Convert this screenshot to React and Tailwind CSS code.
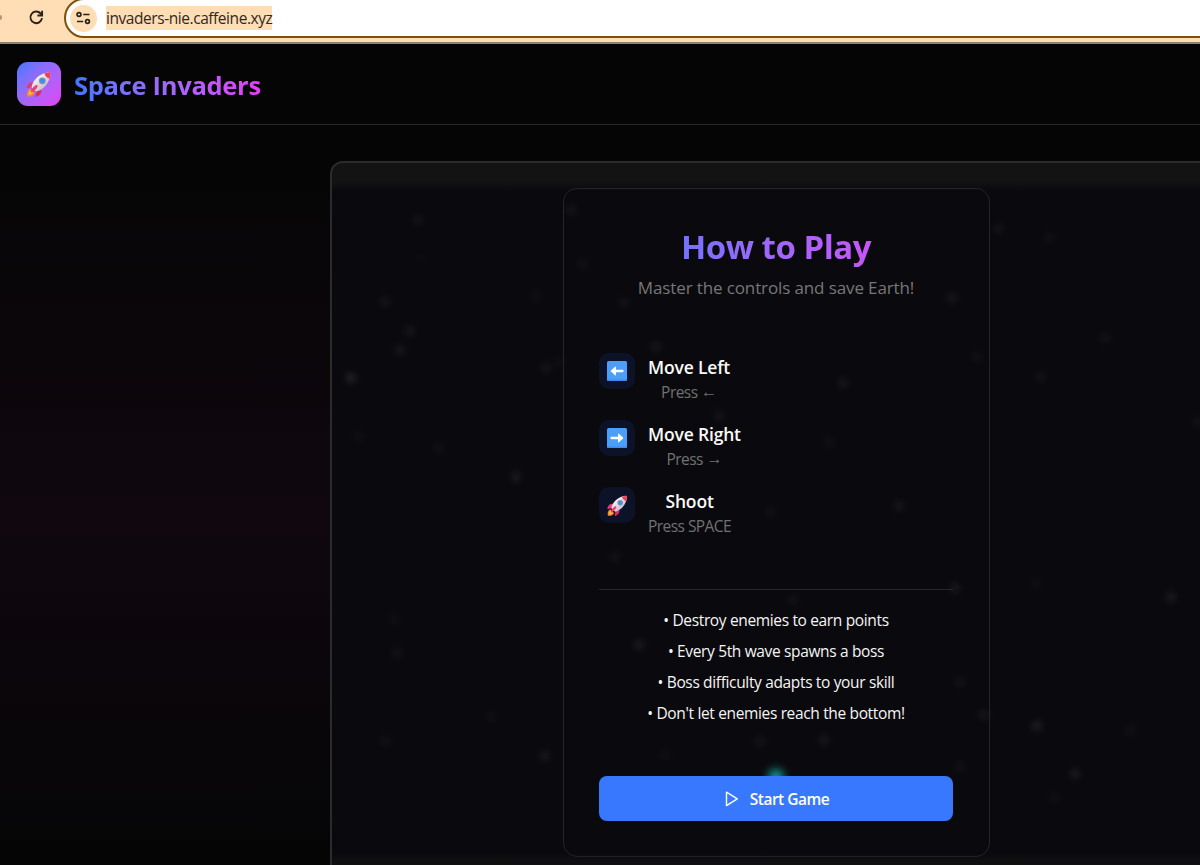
import { useId } from "react";

const controls = [
  { icon: "left", label: "Move Left", keyName: "←" },
  { icon: "right", label: "Move Right", keyName: "→" },
  { icon: "rocket", label: "Shoot", keyName: "SPACE" },
];

const tips = [
  "Destroy enemies to earn points",
  "Every 5th wave spawns a boss",
  "Boss difficulty adapts to your skill",
  "Don't let enemies reach the bottom!",
];

// x, y inside the play field, and brightness
const stars = [
  [85, 56, 0.05], [89, 94, 0.02], [52, 138, 0.06], [77, 167, 0.07], [67, 186, 0.08],
  [18, 214, 0.13], [26, 273, 0.03], [106, 284, 0.04], [183, 313, 0.09], [213, 204, 0.06],
  [226, 198, 0.03], [203, 132, 0.03], [238, 46, 0.06], [250, 100, 0.04], [291, 139, 0.05],
  [323, 183, 0.07], [386, 252, 0.06], [510, 219, 0.07], [619, 134, 0.07], [644, 193, 0.04],
  [666, 65, 0.05], [716, 74, 0.04], [772, 174, 0.05], [708, 213, 0.05], [865, 258, 0.05],
  [566, 342, 0.07], [496, 278, 0.04], [438, 348, 0.04], [282, 393, 0.05], [622, 424, 0.08],
  [703, 420, 0.03], [838, 433, 0.09], [460, 436, 0.05], [306, 481, 0.09], [64, 489, 0.05],
  [61, 455, 0.03], [627, 518, 0.05], [651, 551, 0.07], [704, 562, 0.11], [798, 566, 0.04],
  [742, 610, 0.09], [722, 634, 0.03], [491, 576, 0.08], [427, 578, 0.06], [212, 592, 0.08],
  [158, 553, 0.03], [52, 577, 0.04], [332, 591, 0.03], [627, 603, 0.04],
];

function Rocket({ size }) {
  const id = useId();
  return (
    <svg width={size} height={size} viewBox="0 0 28 28" fill="none">
      <defs>
        <linearGradient id={id} x1="9" y1="7" x2="19" y2="18" gradientUnits="userSpaceOnUse">
          <stop stopColor="#fffafa" />
          <stop offset="1" stopColor="#c9bfcc" />
        </linearGradient>
      </defs>
      <path d="M5 18.5C1.8 20.5 1.7 24 2.4 26.5c3 .2 6-.3 7.4-3.5z" fill="#f98234" />
      <path d="M5.5 20c-1.8 1.3-2.2 2.8-2.1 5.2 2-.1 3.6-.7 4.6-2.4z" fill="#ffb63d" />
      <path d="M9.2 12.2C5 11.2 2.8 13.6 1.6 17.4c-.2.7.4 1 1 .8l5.4-1.4z" fill="#e63b72" />
      <path d="M16 19c1.2 3.8-.8 6.5-4.7 7.7-.7.2-1-.4-.8-1l1.3-5.5z" fill="#d52e62" />
      <path d="M6.5 17.2C8 9.500 14.5 3.5 23.8 2.2c.9-.1 1.9.8 1.8 1.8C24.5 13 18.5 20 11 21.500z" fill={`url(#${id})`} />
      <path d="M19.4 3.4c1.5-.6 3-.9 4.8-1.1.9 0 1.5.7 1.4 1.6-.2 1.7-.6 3.3-1.1 4.8-2.5-.7-4.5-2.7-5.1-5.3z" fill="#ef3f5b" />
      <circle cx="17.3" cy="10.8" r="3.4" fill="#7d91b8" />
      <circle cx="17.3" cy="10.8" r="2.3" fill="#3f8fe8" />
      <path d="M10.6 15.3c1-.9 2.3-.1 2 .9-.9 2.6-3.1 4.9-5.5 6.1-.8.3-1.5-.4-1.2-1.2.9-2.3 2.5-4.3 4.7-5.8z" fill="#ec4079" />
    </svg>
  );
}

function ArrowTile({ right }) {
  return (
    <svg width="20" height="20" viewBox="0 0 20 20" fill="none" className={right ? "-scale-x-100" : ""}>
      <rect width="20" height="20" rx="1.5" fill="#4b9ff8" />
      <path d="M0 18.5h20v.1a1.4 1.4 0 0 1-1.4 1.4H1.4A1.4 1.4 0 0 1 0 18.6z" fill="#4389ec" />
      <path d="M15.5 10H7" stroke="#fff" strokeWidth="2.3" strokeLinecap="round" />
      <path d="M4 9.5 8 5.800c.5-.4 1-.1 1 .5v7.400c0 .6-.5.9-1 .5L4 10.500c-.3-.3-.3-.7 0-1z" fill="#fff" />
    </svg>
  );
}

function BrowserBar() {
  return (
    <div className="flex h-11 shrink-0 items-start border-b-2 border-[#8f8172] bg-[#ffddb5]">
      <div className="mt-[15px] h-[5px] w-0.5 rounded-r bg-[#b6977a]" />
      <svg className="mt-[9px] ml-[26px] shrink-0" width="17" height="17" viewBox="0 0 17 17" fill="none" stroke="#2c2118" strokeWidth="1.9">
        <path d="M14 9.200A5.800 5.800 0 1 1 12.600 4.500L14 6" />
        <path d="M14.100 1.800v4.700H9.400" />
      </svg>
      <div className="-mt-0.5 -mr-10 ml-[19px] flex h-10 flex-1 items-center rounded-full border-2 border-[#7c5105] bg-white pl-1">
        <div className="flex size-[27px] items-center justify-center rounded-full bg-[#ffddb5]">
          <svg width="15" height="14" viewBox="0 0 15 14" fill="none" stroke="#2c2118" strokeWidth="1.7">
            <circle cx="3" cy="3.5" r="1.9" />
            <path d="M7.200 3.500h6.300M1 10.500h6.200" />
            <circle cx="11.5" cy="10.5" r="1.9" />
          </svg>
        </div>
        <span className="ml-[9px] h-6 bg-[#ffddb5] text-[15.5px] leading-6 tracking-[-0.44px] whitespace-nowrap text-[#33281f]">
          invaders-nie.caffeine.xyz
        </span>
      </div>
    </div>
  );
}

function Header() {
  return (
    <header className="flex h-[81px] shrink-0 items-center border-b border-[#292929] bg-[#050505] pl-[17px]">
      <div className="flex size-11 items-center justify-center rounded-[11px] bg-linear-to-br from-[#3b78ff] to-[#e43df5]">
        <Rocket size={28} />
      </div>
      <h1 className="mt-0.5 ml-[13px] bg-linear-to-r from-[#3b78ff] to-[#e43df5] bg-clip-text text-[25.5px] leading-9 font-bold tracking-[-0.3px] whitespace-nowrap text-transparent">
        Space Invaders
      </h1>
    </header>
  );
}

function Control({ icon, label, keyName }) {
  return (
    <li className="flex h-[46px] items-start">
      <div className="flex size-9 items-center justify-center rounded-[10px] bg-[#0c1228]">
        {icon === "rocket" ? <Rocket size={23} /> : <ArrowTile right={icon === "right"} />}
      </div>
      <div className="ml-[13px] pt-px text-center whitespace-nowrap">
        <p className="text-[17.5px] leading-[27px] font-semibold tracking-[-0.17px] text-[#fafafa]">{label}</p>
        <p className="text-[15.5px] leading-[22px] tracking-[-0.55px] text-[#717171]">
          Press{" "}
          {icon === "rocket" ? keyName : <span className="align-[1.5px] text-[16px] leading-none tracking-normal">{keyName}</span>}
        </p>
      </div>
    </li>
  );
}

function HowToPlay() {
  return (
    <section className="relative ml-[231px] flex h-[669px] w-[427px] flex-col rounded-[14px] border border-[#252528] pr-9 pl-[35px]">
      <h2 className="mt-9 bg-linear-to-r from-[#3b78ff] to-[#e43df5] bg-clip-text text-center text-[33px] leading-[44px] font-bold tracking-[-0.5px] text-transparent">
        How to Play
      </h2>
      <p className="mt-[5px] text-center text-[17px] leading-7 tracking-[-0.12px] whitespace-nowrap text-[#777]">
        Master the controls and save Earth!
      </p>

      <ul className="mt-[51px] flex flex-col gap-[21px]">
        {controls.map((control) => (
          <Control key={control.label} {...control} />
        ))}
      </ul>

      <ul className="mt-[56px] flex flex-col border-t border-[#26262a] pt-[15px] text-center text-[15.5px] leading-[31px] tracking-[-0.35px] text-[#f5f5f5]">
        {tips.map((tip) => (
          <li key={tip}>• {tip}</li>
        ))}
      </ul>

      <button className="mt-[47px] flex h-[45px] shrink-0 items-center justify-center rounded-lg bg-[#3778ff] pt-0.5 text-[15.5px] font-semibold tracking-[-0.5px] text-white">
        <svg className="mr-[11px] mb-0.5 ml-0.5" width="14" height="16" viewBox="0 0 14 16" fill="none" stroke="currentColor" strokeWidth="1.4" strokeLinejoin="round">
          <path d="M1.500 1.200v13.400L12.300 7.900z" />
        </svg>
        Start Game
      </button>
    </section>
  );
}

function GameField() {
  return (
    <div className="relative mt-9 ml-[330px] h-[760px] w-[1000px] shrink-0 overflow-hidden rounded-[13px] border-2 border-[#2b2b2c] bg-linear-to-b from-[#131313] from-[18px] via-[#0a0a0e] via-[28px] to-[#0a0a0e] to-[100%] pt-[25px]">
      {stars.map(([x, y, glow]) => (
        <span
          key={`${x}-${y}`}
          className="absolute size-2.5 rounded-full bg-white blur-[3.5px]"
          style={{ left: x - 4, top: y - 4, opacity: glow * 0.85 }}
        />
      ))}
      {/* player ship glowing behind the start button */}
      <span className="absolute top-[606px] left-[436px] size-4 rounded-full bg-[#14948c] blur-[4px]" />
      <HowToPlay />
      <div className="absolute inset-x-0 top-[690px] h-20 bg-linear-to-b from-transparent to-[#131313]/60 to-[8px]" />
    </div>
  );
}

export default function App() {
  return (
    <div className="flex h-[865px] w-[1200px] flex-col overflow-hidden bg-[#050505] font-['Open_Sans','Noto_Sans',sans-serif]">
      <BrowserBar />
      <Header />
      <main className="flex min-h-0 flex-1 flex-col items-start overflow-hidden bg-linear-to-b from-[#050505] from-0% via-[#10070f] via-53% to-[#050506] to-100%">
        <GameField />
      </main>
    </div>
  );
}
